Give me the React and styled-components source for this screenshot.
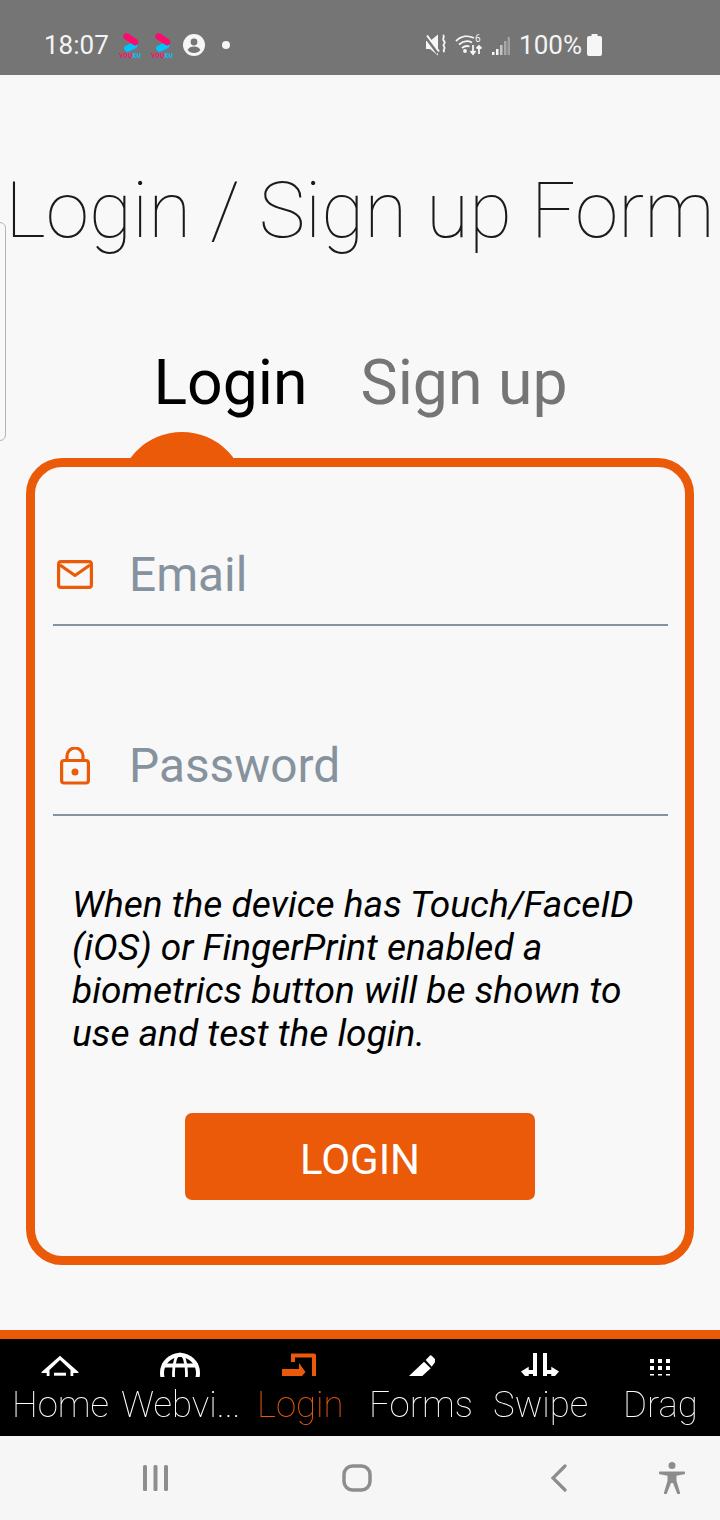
import React from 'react';
import styled, { createGlobalStyle } from 'styled-components';

const ORANGE = '#ea5a08';

const Global = createGlobalStyle`
  html, body { margin: 0; padding: 0; background: #f8f8f8; }
  * { box-sizing: border-box; }
  body { font-family: Roboto, "Liberation Sans", sans-serif; }
`;

const Screen = styled.div`
  position: relative;
  width: 720px;
  height: 1520px;
  display: flex;
  flex-direction: column;
  overflow: hidden;
  background: #f8f8f8;
`;

const StatusBar = styled.div`
  height: 75px;
  flex: none;
  background: #757575;
  display: flex;
  align-items: center;
  justify-content: space-between;
  padding: 15px 118px 0 44px;
  color: #f4f4f4;
  font-size: 26px;
`;

const StatusGroup = styled.div`
  display: flex;
  align-items: center;
  gap: ${p => p.$gap || 0}px;
`;

const Percent = styled.span`
  margin-right: -4px;
`;

const Main = styled.div`
  flex: 1;
  display: flex;
  flex-direction: column;
  align-items: center;
`;

const Title = styled.h1`
  margin: 92px 0 0;
  width: 720px;
  text-align: center;
  white-space: nowrap;
  font-size: 78.5px;
  line-height: 86px;
  font-weight: 100;
  color: #1a1a1a;
`;

const DrawerHandle = styled.div`
  position: absolute;
  left: -6px;
  top: 222px;
  width: 12px;
  height: 219px;
  border: 1px solid #b5b5b5;
  border-radius: 6px;
`;

const Tabs = styled.div`
  margin-top: 95px;
  display: flex;
  gap: 53px;
  height: 70px;
  padding-left: 1px;
`;

const Tab = styled.div`
  font-size: 62.5px;
  line-height: 70px;
  color: ${p => (p.$active ? '#000' : '#757575')};
`;

const Card = styled.form`
  position: relative;
  margin-top: 40px;
  width: 668px;
  height: 807px;
  border: 9px solid ${ORANGE};
  border-radius: 36px;
  padding: 72px 17px 0 18px;
  display: flex;
  flex-direction: column;
`;

const Bump = styled.div`
  position: absolute;
  left: 95px;
  top: -35px;
  width: 103px;
  height: 26px;
  overflow: hidden;
  &::before {
    content: '';
    display: block;
    margin-left: -12.5px;
    width: 128px;
    height: 128px;
    border-radius: 50%;
    background: ${ORANGE};
  }
`;

const Field = styled.div`
  height: 87px;
  margin-bottom: 103px;
  border-bottom: 2px solid #86939e;
  display: flex;
  align-items: center;
  padding-bottom: ${p => p.$lift}px;
`;

const FieldIcon = styled.div`
  width: 78px;
  flex: none;
  display: flex;
  padding-left: ${p => p.$inset}px;
`;

const Placeholder = styled.span`
  font-size: 47.8px;
  margin-left: -2px;
  color: #86939e;
`;

const Note = styled.p`
  margin: -36px 0 0;
  padding: 0 20px 0 19px;
  font-size: 37.1px;
  line-height: 43px;
  font-style: italic;
  color: #000;
`;

const LoginButton = styled.div`
  align-self: center;
  margin: 58px 1px 0 0;
  width: 350px;
  height: 87px;
  padding-top: 5px;
  border-radius: 7px;
  background: ${ORANGE};
  color: #fff;
  font-size: 42px;
  display: flex;
  align-items: center;
  justify-content: center;
`;

const TabBar = styled.div`
  flex: none;
  height: 106px;
  border-top: 9px solid ${ORANGE};
  background: #000;
  display: grid;
  grid-template-columns: repeat(6, 120px);
`;

const TabItem = styled.div`
  display: flex;
  flex-direction: column;
  align-items: center;
  color: ${p => (p.$active ? ORANGE : '#fff')};
`;

const TabIcon = styled.div`
  height: 39px;
  margin-bottom: 5px;
  display: flex;
  justify-content: center;
  overflow: hidden;
`;

const TabLabel = styled.span`
  padding-left: 1px;
  font-size: 36.6px;
  line-height: 44px;
  font-weight: 100;
  white-space: nowrap;
  will-change: transform;
`;

const NavBar = styled.div`
  flex: none;
  height: 84px;
  background: #f6f6f6;
  display: flex;
  align-items: center;
`;

const NavSlot = styled.div`
  display: flex;
  margin-left: ${p => p.$left}px;
`;

const Youxu = () => (
  <svg width="22" height="25" viewBox="0 0 22 25">
    <path d="M8.500 15.500 L15 12.500" stroke="#00c4ff" strokeWidth="6.500" strokeLinecap="round" />
    <path d="M7.500 3.500 L16 9" stroke="#ff0a6c" strokeWidth="6.500" strokeLinecap="round" />
    <text x="0" y="24.500" fontSize="6.500" fontWeight="700" textLength="22" lengthAdjust="spacingAndGlyphs" fontFamily="Roboto, sans-serif" fill="#ff0a6c">YOU<tspan fill="#00c4ff">XU</tspan></text>
  </svg>
);

const Account = () => (
  <svg width="22" height="22" viewBox="0 0 22 22">
    <circle cx="11" cy="11" r="11" fill="#f6f6f6" />
    <circle cx="11" cy="8" r="3.400" fill="#757575" />
    <path d="M4.600 16c1-2.600 3.600-3.600 6.400-3.600s5.400 1 6.400 3.600c-1.400 1.800-3.800 3-6.400 3s-5-1.200-6.400-3z" fill="#757575" />
  </svg>
);

const Dot = styled.i`
  width: 8px;
  height: 8px;
  border-radius: 50%;
  background: #f6f6f6;
  margin-left: 7px;
`;

const Mute = () => (
  <svg width="20" height="22" viewBox="0 0 20 22">
    <path d="M0 7h4l8-6.500v21L4 15H0z" fill="#f6f6f6" />
    <path d="M0 3l12 16" stroke="#757575" strokeWidth="3.500" />
    <path d="M1 1.500l12 16" stroke="#f6f6f6" strokeWidth="2" />
    <path d="M17 1c2.500 2.500-1.500 3.500 1 6s-2 3 0 5.500-2 3 .5 5.500" stroke="#f6f6f6" strokeWidth="1.800" fill="none" />
  </svg>
);

const Wifi = () => (
  <svg width="28" height="24" viewBox="0 0 28 24" fill="none" stroke="#f6f6f6" strokeWidth="1.800">
    <path d="M1 8c5-5 12-6 18-3" />
    <path d="M4 11.500c4-3.500 9-4 13-2" />
    <path d="M7 15c2.500-2 5-2.500 7.500-1.500" />
    <circle cx="10" cy="18" r="1" fill="#f6f6f6" />
    <path d="M18 12v9m-2.500-3l2.500 3 2.500-3M24 21v-8m-2.500 2.500L24 13l2.500 2.500" />
    <text x="20" y="9" fontSize="10" fontFamily="Roboto, sans-serif" fill="#f6f6f6" stroke="none">6</text>
  </svg>
);

const Signal = () => (
  <svg width="18" height="20" viewBox="0 0 18 20">
    <rect x="0" y="17" width="2.500" height="3" fill="#f6f6f6" />
    <rect x="4" y="14" width="2.500" height="6" fill="#f6f6f6" />
    <rect x="8" y="10" width="2.500" height="10" fill="#c4c4c4" />
    <rect x="12" y="6" width="2.500" height="14" fill="#a8a8a8" />
    <rect x="15.500" y="2" width="2.500" height="18" fill="#a0a0a0" />
  </svg>
);

const Battery = () => (
  <svg width="15" height="22" viewBox="0 0 15 22">
    <path d="M4.500 0h6v2h2.500a2 2 0 0 1 2 2v16a2 2 0 0 1-2 2H2a2 2 0 0 1-2-2V4a2 2 0 0 1 2-2h2.500z" fill="#f6f6f6" />
  </svg>
);

const MailIcon = () => (
  <svg width="36" height="29" viewBox="0 0 36 29" fill="none" stroke={ORANGE} strokeWidth="3.200" strokeLinejoin="round">
    <rect x="1.600" y="1.600" width="32.800" height="25.800" rx="2.500" />
    <path d="M3 5l15 10.500L33 5" />
  </svg>
);

const LockIcon = () => (
  <svg width="30" height="38" viewBox="0 0 30 38" fill="none" stroke={ORANGE} strokeWidth="3.200">
    <rect x="1.600" y="13.500" width="26.800" height="22.500" rx="2.500" />
    <path d="M7 13.500V9a8 8 0 0 1 16 0v4.500" />
    <circle cx="15" cy="25" r="3.500" fill={ORANGE} stroke="none" />
  </svg>
);

const HomeIcon = () => (
  <svg width="40" height="39" viewBox="0 0 40 39" fill="#fff">
    <path d="M20 16.700L1.500 33v1h5.200v3h2.800v-6L20 21l10.500 10v6h2.800v-3h5.200v-1z" />
    <path d="M14 33.700h12v3H14z" />
  </svg>
);

const GlobeIcon = () => (
  <svg width="40" height="38" viewBox="0 0 40 38" fill="none" stroke="#fff">
    <circle cx="20" cy="34" r="18" strokeWidth="4" />
    <ellipse cx="20" cy="34" rx="6.500" ry="19" strokeWidth="2.800" />
    <path d="M2 26.500h36" strokeWidth="4" />
    <path d="M4 38h3M33 38h3" strokeWidth="0" />
  </svg>
);

const LoginIcon = () => (
  <svg width="36" height="39" viewBox="0 0 36 39" fill={ORANGE}>
    <path d="M9 14.500h23a2 2 0 0 1 2 2V37h-4V18.500H13V23H9z" />
    <path d="M0 30h17v-6l6.500 9-3.500 4H0z" />
  </svg>
);

const PenIcon = () => (
  <svg width="30" height="39" viewBox="0 0 30 39" fill="#fff">
    <path d="M4 37L19 22.700 25.700 29.300 17.300 37z" />
    <path d="M20.700 21L25 16.500a1 1 0 0 1 1.400 0l4.400 4.400a1 1 0 0 1 0 1.400l-4.100 5.400z" />
  </svg>
);

const SwipeIcon = () => (
  <svg width="40" height="39" viewBox="0 0 40 39" fill="#fff">
    <path d="M13 14h4v23h-4zM23 14h4v23h-4z" />
    <path d="M1 32.600L8.700 27.700V31H13v4H8.700v2H5z" />
    <path d="M39 32.600L31.300 27.700V31H27v4h4.300v2H35z" />
  </svg>
);

const GridIcon = () => (
  <svg width="20" height="39" viewBox="0 0 20 39" fill="#fff">
    <path d="M0 20h4v4H0zM8 20h4v4H8zM16 20h4v4h-4zM0 27h4v4H0zM8 27h4v4H8zM16 27h4v4h-4zM0 35h4v1.500H0zM8 35h4v1.500H8zM16 35h4v1.500h-4z" />
  </svg>
);

const NavBars = () => (
  <svg width="26" height="26" viewBox="0 0 26 26" fill="#8d8d8d">
    <rect x="0" y="0" width="4" height="26" rx="1.500" />
    <rect x="10.500" y="0" width="4" height="26" rx="1.500" />
    <rect x="21" y="0" width="4" height="26" rx="1.500" />
  </svg>
);

const NavHome = () => (
  <svg width="30" height="28" viewBox="0 0 30 28" fill="none" stroke="#8d8d8d" strokeWidth="3.500">
    <rect x="2" y="2" width="26" height="24" rx="8.500" />
  </svg>
);

const NavBack = () => (
  <svg width="18" height="28" viewBox="0 0 18 28" fill="none" stroke="#8d8d8d" strokeWidth="3.200" strokeLinecap="round">
    <path d="M15 2L3 14l12 12" />
  </svg>
);

const NavPerson = () => (
  <svg width="26" height="32" viewBox="0 0 26 32" fill="#8d8d8d">
    <circle cx="13" cy="3.500" r="3.500" />
    <path d="M1 9.500h24a1.400 1.400 0 0 1 0 2.800l-7.500 1.500V19l3.500 11.500a1.500 1.500 0 0 1-3 .8L14 21h-2L8 31.300a1.500 1.500 0 0 1-3-.8L8.500 19v-5.200L1 12.300a1.400 1.400 0 0 1 0-2.800z" />
  </svg>
);

const tabs = [
  { label: 'Home', icon: <HomeIcon /> },
  { label: 'Webvi...', icon: <GlobeIcon /> },
  { label: 'Login', icon: <LoginIcon />, active: true },
  { label: 'Forms', icon: <PenIcon /> },
  { label: 'Swipe', icon: <SwipeIcon /> },
  { label: 'Drag', icon: <GridIcon /> },
];

export default function App() {
  return (
    <Screen>
      <Global />
      <StatusBar>
        <StatusGroup $gap={10}>
          <span>18:07</span>
          <Youxu />
          <Youxu />
          <Account />
          <Dot />
        </StatusGroup>
        <StatusGroup $gap={9}>
          <Mute />
          <Wifi />
          <Signal />
          <Percent>100%</Percent>
          <Battery />
        </StatusGroup>
      </StatusBar>
      <Main>
        <Title>Login / Sign up Form</Title>
        <Tabs>
          <Tab $active>Login</Tab>
          <Tab>Sign up</Tab>
        </Tabs>
        <Card>
          <Bump />
          <Field $lift={14}>
            <FieldIcon $inset={4}><MailIcon /></FieldIcon>
            <Placeholder>Email</Placeholder>
          </Field>
          <Field $lift={11}>
            <FieldIcon $inset={7}><LockIcon /></FieldIcon>
            <Placeholder>Password</Placeholder>
          </Field>
          <Note>
            When the device has Touch/FaceID (iOS) or FingerPrint enabled a biometrics button will be shown to use and test the login.
          </Note>
          <LoginButton>LOGIN</LoginButton>
        </Card>
      </Main>
      <TabBar>
        {tabs.map(t => (
          <TabItem key={t.label} $active={t.active}>
            <TabIcon>{t.icon}</TabIcon>
            <TabLabel>{t.label}</TabLabel>
          </TabItem>
        ))}
      </TabBar>
      <NavBar>
        <NavSlot $left={143}><NavBars /></NavSlot>
        <NavSlot $left={173}><NavHome /></NavSlot>
        <NavSlot $left={178}><NavBack /></NavSlot>
        <NavSlot $left={91}><NavPerson /></NavSlot>
      </NavBar>
      <DrawerHandle />
    </Screen>
  );
}
